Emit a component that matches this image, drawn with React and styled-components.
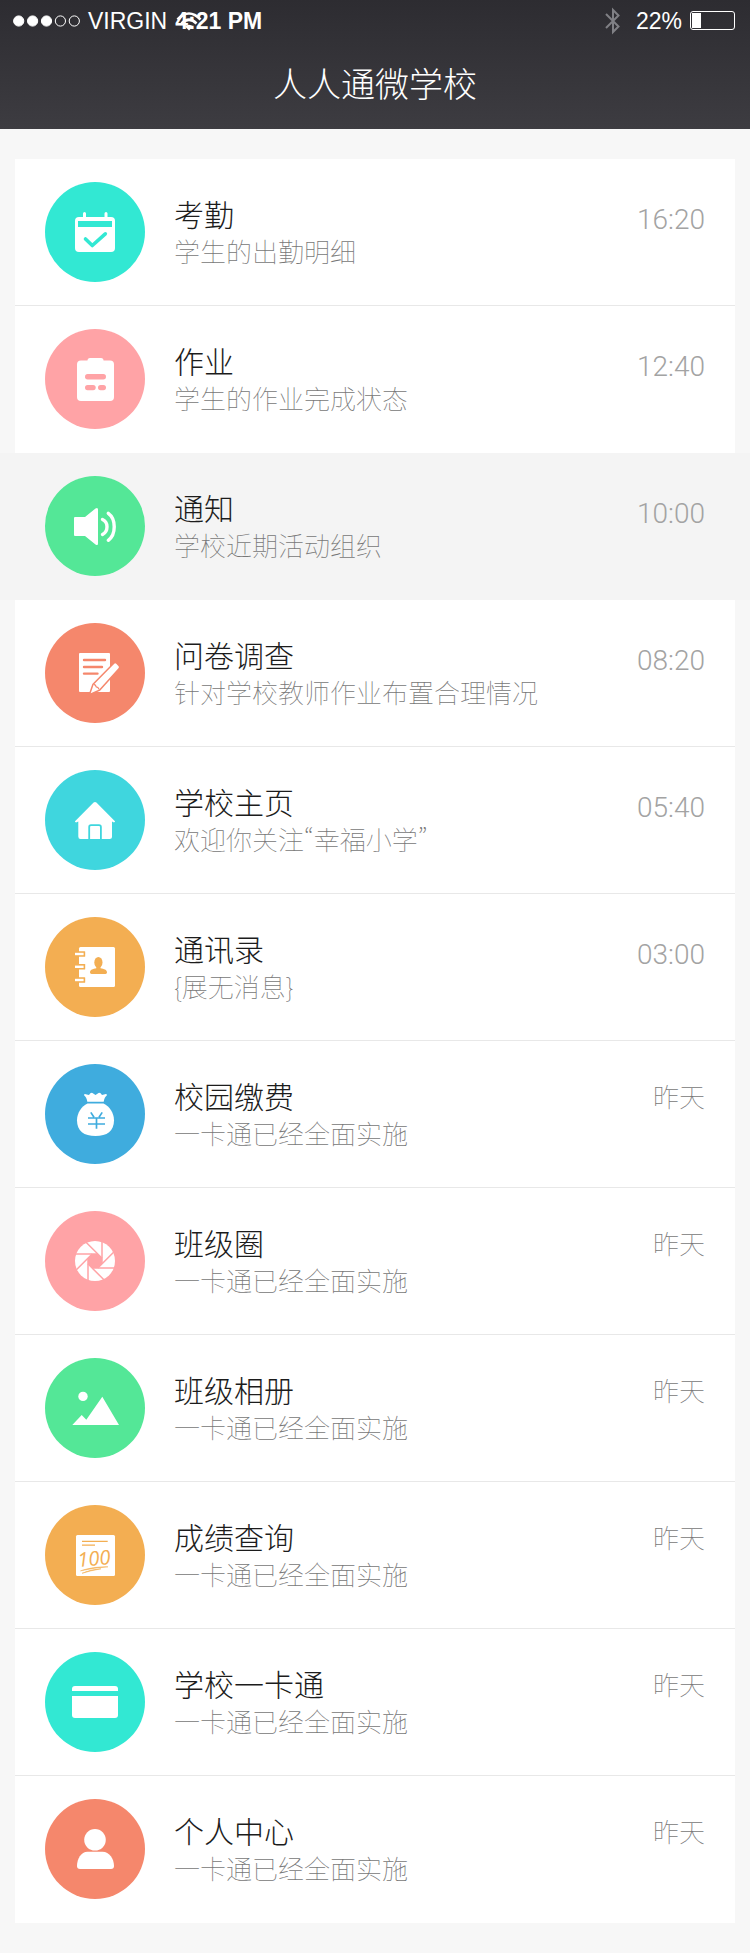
import styled, { createGlobalStyle, css } from 'styled-components';

const colors = {
  teal: '#32e8d3',
  pink: '#ffa3a6',
  green: '#54e797',
  coral: '#f5876c',
  cyan: '#3fd6de',
  amber: '#f3ae52',
  blue: '#3facde',
};

const GlobalStyle = createGlobalStyle`
  * {
    box-sizing: border-box;
  }
  body {
    margin: 0;
    background-color: #f7f7f7;
    font-family: 'Noto Sans CJK SC', 'Noto Sans', sans-serif;
    font-weight: 300;
  }
`;

//! Dark top area: status bar + page title
const Header = styled.header`
  height: 129px;
  color: #fff;
  background-image: linear-gradient(#2d2c31, #3d3c41);
`;

const StatusBar = styled.div`
  display: flex;
  justify-content: space-between;
  align-items: center;
  height: 41px;
  padding: 0 15px 0 13px;
  font-family: 'Liberation Sans', Arial, sans-serif;
  font-size: 23px;
  font-weight: 400;
  line-height: 28px;
`;

const StatusGroup = styled.div`
  display: flex;
  align-items: center;
  gap: ${(p) => p.$gap};
`;

const Clock = styled.strong`
  position: relative;
  font-weight: 700;

  /* The wifi sign lies over the first digits */
  svg {
    position: absolute;
    left: 0;
    top: 4px;
  }
`;

const Battery = styled.div`
  width: 45px;
  height: 19px;
  padding: 1px;
  border: 1px solid #fff;
  border-radius: 3px;

  &:before {
    content: '';
    display: block;
    width: 22%;
    height: 100%;
    background-color: #fff;
  }
`;

const PageTitle = styled.h1`
  margin: 0;
  padding-top: 18px;
  font-size: 34px;
  font-weight: 300;
  line-height: 48px;
  text-align: center;
`;

//! List of entries
const List = styled.ul`
  margin: 30px 15px;
  padding: 0;
  list-style-type: none;
`;

const Item = styled.li`
  height: 147px;
  background-color: #fff;
  border-bottom: 1px solid ${(p) => (p.$divider ? '#e8e8e8' : 'transparent')};

  /* The selected entry reaches both edges of the screen */
  ${(p) =>
    p.$active &&
    css`
      margin: 0 -15px;
      padding: 0 15px;
      background-color: #f4f4f4;
    `}
`;

const ItemLink = styled.a`
  display: flex;
  align-items: center;
  gap: 29px;
  height: 100%;
  padding: 0 30px;
  color: inherit;
  text-decoration: none;
`;

const Badge = styled.span`
  flex: none;
  width: 100px;
  height: 100px;
  border-radius: 50%;
  color: ${(p) => p.$bg};
  background-color: ${(p) => p.$bg};

  svg {
    display: block;
  }
`;

const Texts = styled.div`
  flex: 1;
  min-width: 0;
`;

const Name = styled.h2`
  margin: 0 0 2px;
  color: #1c1c1c;
  font-size: 30px;
  font-weight: 300;
  line-height: 36px;
`;

/* pwid: quotes keep their narrow latin width */
const Info = styled.p`
  margin: 0;
  color: #777;
  font-size: 26px;
  font-weight: 100;
  font-feature-settings: 'pwid';
  line-height: 36px;
`;

const Time = styled.time`
  align-self: flex-start;
  margin-top: ${(p) => (p.$digits ? '41px' : '35px')};
  color: ${(p) => (p.$digits ? '#a3a3a3' : '#777')};
  font-family: ${(p) => (p.$digits ? 'Roboto, sans-serif' : 'inherit')};
  font-size: ${(p) => (p.$digits ? '28px' : '26px')};
  font-weight: ${(p) => (p.$digits ? 300 : 100)};
  line-height: 40px;
`;

//! Icons: white shapes, cut-outs take the badge colour through currentColor
const Icon = ({ children }) => (
  <svg width='100' height='100' viewBox='0 0 100 100' fill='#fff' aria-hidden='true'>
    {children}
  </svg>
);

const CalendarIcon = () => (
  <Icon>
    <rect x='30' y='35' width='40' height='35' rx='4' />
    <path d='M39.5 31.5V37M61 31.5V37' stroke='#fff' strokeWidth='3' strokeLinecap='round' />
    <rect x='33' y='39' width='34' height='6' fill='currentColor' />
    <path
      d='M40.5 57L47.3 63.5L60.3 51.8'
      fill='none'
      stroke='currentColor'
      strokeWidth='3.6'
      strokeLinecap='round'
      strokeLinejoin='round'
    />
  </Icon>
);

const ClipboardIcon = () => (
  <Icon>
    <rect x='32' y='31.5' width='37' height='40.5' rx='4' />
    <rect x='42.5' y='29' width='16' height='8' rx='2.5' />
    <g fill='currentColor'>
      <rect x='40' y='45' width='21' height='5.4' rx='2.7' />
      <rect x='40' y='56' width='10.7' height='5.2' rx='2.6' />
      <rect x='53' y='56' width='8' height='5.2' rx='2.6' />
    </g>
  </Icon>
);

const SpeakerIcon = () => (
  <Icon>
    <path d='M30 41H40L50.5 32.4Q53 31 53 33.5V67.5Q53 70 50.5 68.4L40 60H30Q29 60 29 59V42Q29 41 30 41Z' />
    <path
      d='M57.5 43.5Q62 45.5 62 50.7Q62 56 57.5 58.5M63.3 37.3C71.2 43 71.2 58.5 63.3 64.3'
      fill='none'
      stroke='#fff'
      strokeWidth='3.4'
      strokeLinecap='round'
    />
  </Icon>
);

const SurveyIcon = () => (
  <Icon>
    <rect x='34' y='30' width='31' height='39' rx='1' />
    <path
      d='M39 37H60M39 44H57M39 50.6H52.5'
      stroke='currentColor'
      strokeWidth='2.4'
      strokeLinecap='round'
    />
    <path
      d='M45.7 70.3L48.6 61.8L69.3 40.8Q70.2 39.8 71.2 40.8L73.6 43.2Q74.4 44.2 73.4 45.2L54.2 66.6Z'
      stroke='currentColor'
      strokeWidth='3'
      paintOrder='stroke'
    />
    <path d='M49 61.4Q50.8 62 51.2 63.8Q53.2 64 54 66.2' fill='none' stroke='currentColor' strokeWidth='1.2' />
  </Icon>
);

const HomeIcon = () => (
  <Icon>
    <path d='M48.6 32.6Q50 31.4 51.4 32.6L70.2 51.4L69 52.6L67 51.4V66.5Q67 69 64.5 69H35.5Q33.3 69 33.3 66.5V51.4L31 52.6L29.8 51.4Z' />
    <path
      d='M44.2 69V57Q44.2 55.2 46 55.2H54Q55.9 55.2 55.9 57V69'
      fill='none'
      stroke='currentColor'
      strokeWidth='1.8'
    />
  </Icon>
);

const ContactsIcon = () => (
  <Icon>
    <rect x='34' y='30' width='36' height='40' rx='1.5' />
    {[37, 49.8, 63].map((y) => (
      <g key={y}>
        <rect x='33.5' y={y - 2.8} width='6.7' height='5.6' rx='0.6' fill='currentColor' />
        <rect x='30' y={y - 1.2} width='8.6' height='2.4' />
      </g>
    ))}
    <g fill='currentColor'>
      <ellipse cx='53.4' cy='45.4' rx='4.1' ry='5.4' />
      <path d='M51.3 48H55.5V51.3C59 52.2 62 52.5 62 55.6Q62 57 60.5 57H46.5Q45 57 45 55.6C45 52.5 48 52.2 51.3 51.3Z' />
    </g>
  </Icon>
);

const MoneyBagIcon = () => (
  <Icon>
    <path d='M39.2 31.5Q38.8 29.6 40.8 30.2L44 31Q46 27.8 48.2 29.4L50.5 31L52.8 29.4Q55 27.8 57 31L60 30.2Q62.2 29.6 61.8 31.5Q59.5 33 58.7 37.8H42.3Q41.5 33 39.2 31.5Z' />
    <path d='M42.5 39.4H58.5C64.5 42 69 49 69 56.2C69 67 62 72 50.5 72C39 72 32 67 32 56.2C32 49 36.5 42 42.5 39.4Z' />
    <path
      d='M45.8 48.4L49 53.2M57.2 48.4L54 53.2M43 54H60M43 60H60M51.5 54V64.8'
      fill='none'
      stroke='currentColor'
      strokeWidth='1.7'
    />
  </Icon>
);

const ApertureIcon = () => (
  <Icon>
    <circle cx='50' cy='50' r='20' />
    <path d='M57 47.1V52.9L52.9 57H47.1L43 52.9V47.1L47.1 43H52.9Z' fill='currentColor' />
    {[0, 45, 90, 135, 180, 225, 270, 315].map((deg) => (
      <path
        key={deg}
        d='M57 30V53'
        stroke='currentColor'
        strokeWidth='1.5'
        transform={`rotate(${deg} 50 50)`}
      />
    ))}
  </Icon>
);

const AlbumIcon = () => (
  <Icon>
    <circle cx='38' cy='38.4' r='4.7' />
    <path d='M27.3 67L36.7 57L41.3 61.8L57.3 38.7L74 67Z' />
  </Icon>
);

const Score = styled.text`
  font-family: 'Open Sans', sans-serif;
  font-size: 20px;
  font-style: italic;
  font-weight: 400;
`;

const ScoreIcon = () => (
  <Icon>
    <rect x='31' y='30' width='39' height='41' rx='1.5' />
    <path d='M37 36.4H62.7M37 40.2H50' stroke='currentColor' strokeWidth='1.3' />
    <Score x='33' y='60.5' fill='currentColor' transform='rotate(-5 50 60)'>
      100
    </Score>
    <path
      d='M35.5 65.8Q48 61.5 63 61.8Q49 63 35.5 65.8ZM37 68.3Q45 64.5 56 63.8Q46 65.6 37 68.3Z'
      fill='currentColor'
      stroke='currentColor'
      strokeWidth='0.5'
    />
  </Icon>
);

const CardIcon = () => (
  <Icon>
    <path d='M27 39V37Q27 34 30 34H70Q73 34 73 37V39Z' />
    <path d='M27 44H73V63Q73 66 70 66H30Q27 66 27 63Z' />
  </Icon>
);

const PersonIcon = () => (
  <Icon>
    <circle cx='50' cy='40.8' r='10.8' />
    <path d='M42.5 52.7H57.5C64.5 52.7 69 60 69 67Q69 70 66 70H35Q32 70 32 67C32 60 36 52.7 42.5 52.7Z' />
  </Icon>
);

//! Status bar drawings
const SignalDots = () => (
  <svg width='67' height='12' viewBox='0 0 67 12' aria-hidden='true'>
    {[0, 1, 2, 3, 4].map((n) => (
      <circle
        key={n}
        cx={5.7 + n * 13.9}
        cy='6'
        r='5.1'
        fill={n < 3 ? '#fff' : 'none'}
        stroke='#fff'
        strokeWidth='1'
      />
    ))}
  </svg>
);

const WifiSign = () => (
  <svg width='28' height='20' viewBox='0 0 28 20' fill='none' stroke='#fff' strokeWidth='2.6' aria-hidden='true'>
    <path d='M2.5 8.5Q14 -3.5 25.5 8.5M6.5 12.5Q14 5 21.5 12.5' />
    <path d='M10 15.6Q14 12 18 15.6L14 19.6Z' fill='#fff' stroke='none' />
  </svg>
);

const BluetoothSign = () => (
  <svg width='15' height='28' viewBox='0 0 15 28' fill='none' stroke='#808085' strokeWidth='2' aria-hidden='true'>
    <path d='M1 7L13.5 19.5L8 25V3L13.5 8.5L1 21' />
  </svg>
);

const items = [
  { name: '考勤', info: '学生的出勤明细', time: '16:20', color: colors.teal, icon: CalendarIcon },
  { name: '作业', info: '学生的作业完成状态', time: '12:40', color: colors.pink, icon: ClipboardIcon },
  { name: '通知', info: '学校近期活动组织', time: '10:00', color: colors.green, icon: SpeakerIcon, active: true },
  { name: '问卷调查', info: '针对学校教师作业布置合理情况', time: '08:20', color: colors.coral, icon: SurveyIcon },
  { name: '学校主页', info: '欢迎你关注“幸福小学”', time: '05:40', color: colors.cyan, icon: HomeIcon },
  { name: '通讯录', info: '{展无消息}', time: '03:00', color: colors.amber, icon: ContactsIcon },
  { name: '校园缴费', info: '一卡通已经全面实施', time: '昨天', color: colors.blue, icon: MoneyBagIcon },
  { name: '班级圈', info: '一卡通已经全面实施', time: '昨天', color: colors.pink, icon: ApertureIcon },
  { name: '班级相册', info: '一卡通已经全面实施', time: '昨天', color: colors.green, icon: AlbumIcon },
  { name: '成绩查询', info: '一卡通已经全面实施', time: '昨天', color: colors.amber, icon: ScoreIcon },
  { name: '学校一卡通', info: '一卡通已经全面实施', time: '昨天', color: colors.teal, icon: CardIcon },
  { name: '个人中心', info: '一卡通已经全面实施', time: '昨天', color: colors.coral, icon: PersonIcon },
];

const Entry = ({ name, info, time, color, icon: Glyph, active, divider }) => (
  <Item $active={active} $divider={divider}>
    <ItemLink href='#'>
      <Badge $bg={color}>
        <Glyph />
      </Badge>
      <Texts>
        <Name>{name}</Name>
        <Info>{info}</Info>
      </Texts>
      <Time $digits={time.includes(':')}>{time}</Time>
    </ItemLink>
  </Item>
);

const App = () => (
  <>
    <GlobalStyle />
    <Header>
      <StatusBar>
        <StatusGroup $gap='8px'>
          <SignalDots />
          <span>VIRGIN</span>
          <Clock>
            4:21 PM
            <WifiSign />
          </Clock>
        </StatusGroup>
        <StatusGroup $gap='16px'>
          <BluetoothSign />
          <StatusGroup $gap='8px'>
            <span>22%</span>
            <Battery />
          </StatusGroup>
        </StatusGroup>
      </StatusBar>
      <PageTitle>人人通微学校</PageTitle>
    </Header>
    <List>
      {items.map((item, i) => {
        const next = items[i + 1];
        // no line beside the selected entry or under the last one
        const divider = Boolean(next) && !item.active && !next.active;
        return <Entry key={item.name} {...item} divider={divider} />;
      })}
    </List>
  </>
);

export default App;
